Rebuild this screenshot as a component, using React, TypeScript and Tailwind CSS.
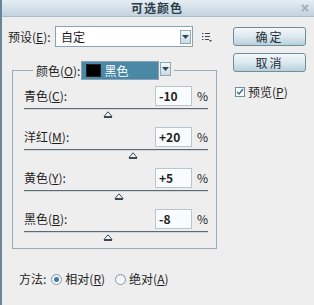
const font = { fontFamily: '"Noto Sans CJK SC", "Liberation Sans", sans-serif' };

function ArrowBtn({ className }: { className: string }) {
  return (
    <div className={`flex items-center justify-center border border-[#8fa9b8] bg-gradient-to-b from-[#f4f8fa] to-[#c9dae3] ${className}`}>
      <svg width="7" height="4" viewBox="0 0 7 4">
        <path d="M0 0h7L3.5 4z" fill="#33495a" />
      </svg>
    </div>
  );
}

function Thumb() {
  return (
    <svg width="10" height="7" viewBox="0 0 10 7">
      <path d="M5 0.8L9 5.5H1z" fill="#f6f6f6" stroke="#3d4a52" strokeWidth="1" />
      <path d="M1 6.5h8" stroke="#3d4a52" strokeWidth="1" />
    </svg>
  );
}

const rows = [
  { label: '青色', key: 'C', value: '-10', pos: 84 },
  { label: '洋红', key: 'M', value: '+20', pos: 109 },
  { label: '黄色', key: 'Y', value: '+5', pos: 95 },
  { label: '黑色', key: 'B', value: '-8', pos: 84 },
];

function Button({ children }: { children: React.ReactNode }) {
  return (
    <button className="w-[73px] h-[19px] rounded-[3px] border border-[#6f8e9d] bg-gradient-to-b from-[#f3f8fa] via-[#dce9ee] to-[#b9d0da] text-[12px] leading-none text-[#1f2e38] tracking-[2px]">
      {children}
    </button>
  );
}

function Radio({ on }: { on?: boolean }) {
  return (
    <div className="w-[11px] h-[11px] rounded-full border border-[#7b98a8] bg-gradient-to-b from-[#e6eef2] to-[#ffffff] flex items-center justify-center">
      {on && <div className="w-[5px] h-[5px] rounded-full bg-[#3f7ca0]" />}
    </div>
  );
}

export default function App() {
  return (
    <div className="w-[314px] h-[305px] bg-[#eeeeee] border-l-2 border-[#6a8599] text-[#1e1e1e] text-[12px] leading-none overflow-hidden" style={font}>
      <div className="h-[17px] flex items-center justify-center relative bg-gradient-to-b from-[#e6eef3] to-[#c2d3de] border-b border-[#a9bcc8]">
        <span className="font-bold text-[12px] text-[#2c3e4c] tracking-[1px] ml-[-2px]">可选颜色</span>
        <svg className="absolute right-[4px] top-[3px]" width="10" height="10" viewBox="0 0 10 10">
          <path d="M2 2l6 6M8 2l-6 6" stroke="#a4b2bc" strokeWidth="2" />
        </svg>
      </div>

      <div className="flex">
        <div className="w-[229px]">
          <div className="flex items-center mt-[9px] pl-[6px] h-[21px]">
            <span className="w-[47px]">预设(<u>E</u>):</span>
            <div className="w-[138px] h-[21px] border border-[#8aa3b3] bg-white flex items-center pl-[5px]">
              <span className="flex-1">自定</span>
              <ArrowBtn className="w-[11px] h-[14px] mr-[1px]" />
            </div>
            <svg className="ml-[9px]" width="10" height="10" viewBox="0 0 10 10">
              <path d="M0 1.5h1.5M3 1.5h5M0 4.5h1.5M3 4.5h5M0 7.5h1.5M3 7.5h4" stroke="#3a4650" strokeWidth="1.2" />
              <path d="M7 8h3l-1.5 2z" fill="#3a4650" />
            </svg>
          </div>

          <fieldset className="ml-[10px] mt-[14px] w-[205px] h-[188px] border border-[#9aabb4] pl-[11px] pr-[8px] pt-[6px]">
            <legend className="ml-[9px] px-[3px] flex items-center h-[19px]">
              <span className="mr-[-2px]">颜色(<u>O</u>):</span>
              <div className="w-[78px] h-[19px] border border-[#8aa3b3] bg-[#4a88a6] flex items-center pl-[4px] ml-[3px]">
                <div className="w-[15px] h-[13px] bg-black border border-[#222]" />
                <span className="ml-[3px] text-white">黑色</span>
              </div>
              <ArrowBtn className="w-[11px] h-[14px] ml-[1px] self-start mt-[1px] bg-white" />
            </legend>
            <div className="flex flex-col">
              {rows.map((r) => (
                <div key={r.key} className="h-[41px]">
                  <div className="flex items-center h-[20px]">
                    <span className="flex-1">
                      {r.label}(<u>{r.key}</u>):
                    </span>
                    <div className="w-[37px] h-[20px] border border-[#b8c6ce] bg-[#f8fcfd] flex items-center pl-[3px] font-semibold text-[12px]">
                      {r.value}
                    </div>
                    <span className="w-[16px] text-right">%</span>
                  </div>
                  <div className="relative mt-[2px] h-[2px] border-t border-[#5d6a72] border-b border-b-[#d0d6da] w-[184px]">
                    <div className="absolute top-[2px]" style={{ left: r.pos - 5 }}>
                      <Thumb />
                    </div>
                  </div>
                </div>
              ))}
            </div>
          </fieldset>

          <div className="flex items-center mt-[23px] pl-[17px] h-[14px]">
            <span className="mr-[5px]">方法:</span>
            <Radio on />
            <span className="ml-[3px]">相对(<u>R</u>)</span>
            <div className="ml-[10px]">
              <Radio />
            </div>
            <span className="ml-[3px]">绝对(<u>A</u>)</span>
          </div>
        </div>

        <div className="flex flex-col pl-[2px] pt-[10px]">
          <Button>确定</Button>
          <div className="h-[7px]" />
          <Button>取消</Button>
          <div className="flex items-center mt-[14px] ml-[2px]">
            <div className="w-[10px] h-[10px] border border-[#6f8fa0] bg-white flex items-center justify-center">
              <svg width="8" height="8" viewBox="0 0 8 8">
                <path d="M1 4l2 2 4-5" fill="none" stroke="#2f6fa0" strokeWidth="1.5" />
              </svg>
            </div>
            <span className="ml-[3px]">预览(<u>P</u>)</span>
          </div>
        </div>
      </div>
    </div>
  );
}
